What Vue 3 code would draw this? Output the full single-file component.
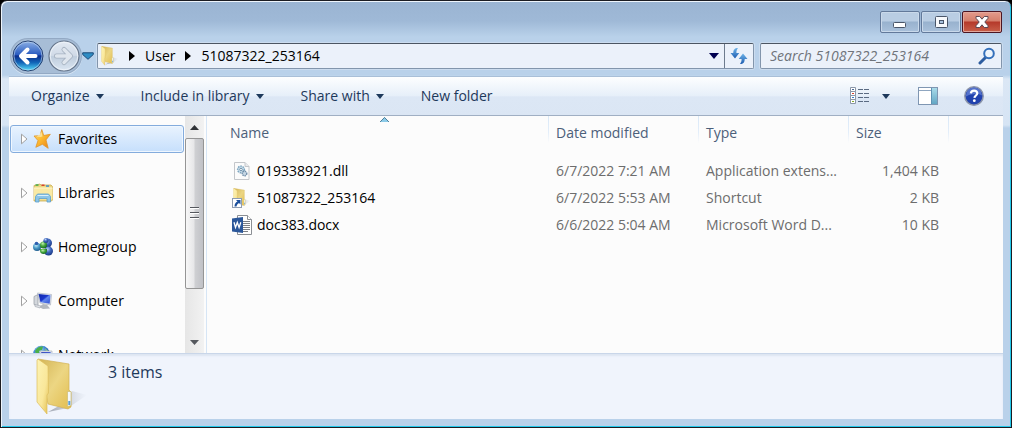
<script setup>
import { ref } from 'vue'

const query = ref('')

const commands = [
  { label: 'Organize', menu: true },
  { label: 'Include in library', menu: true },
  { label: 'Share with', menu: true },
  { label: 'New folder', menu: false },
]

const places = [
  { id: 'star', label: 'Favorites' },
  { id: 'libraries', label: 'Libraries' },
  { id: 'homegroup', label: 'Homegroup' },
  { id: 'computer', label: 'Computer' },
  { id: 'network', label: 'Network' },
]
const current = ref('star')

const files = [
  { icon: 'dll', name: '019338921.dll', date: '6/7/2022 7:21 AM', type: 'Application extens...', size: '1,404 KB' },
  { icon: 'shortcut', name: '51087322_253164', date: '6/7/2022 5:53 AM', type: 'Shortcut', size: '2 KB' },
  { icon: 'word', name: 'doc383.docx', date: '6/6/2022 5:04 AM', type: 'Microsoft Word D...', size: '10 KB' },
]
</script>

<template>
  <div class="window">
    <svg class="defs" width="0" height="0" aria-hidden="true">
      <defs>
        <linearGradient id="gFront" x1="0" x2="1" y1="0" y2="1">
          <stop offset="0" stop-color="#fdf3b4" /><stop offset=".6" stop-color="#f9e79a" /><stop offset="1" stop-color="#e3bf50" />
        </linearGradient>
        <linearGradient id="gBack" x1="0" x2="1" y1="0" y2="1">
          <stop offset="0" stop-color="#d3b455" /><stop offset=".5" stop-color="#ecd683" /><stop offset="1" stop-color="#e2bd4e" />
        </linearGradient>
        <linearGradient id="gShade" x1="0" x2="1" y1="0" y2="0">
          <stop offset="0" stop-color="#6b7280" stop-opacity=".6" /><stop offset="1" stop-color="#9aa3b0" stop-opacity="0" />
        </linearGradient>
        <linearGradient id="gBlue" x1="0" x2="0" y1="0" y2="1">
          <stop offset="0" stop-color="#8fb2e6" /><stop offset=".45" stop-color="#2a5cc0" /><stop offset=".5" stop-color="#0a2c8c" /><stop offset=".72" stop-color="#1266b8" /><stop offset="1" stop-color="#5be4ff" />
        </linearGradient>
        <linearGradient id="gGrey" x1="0" x2="0" y1="0" y2="1">
          <stop offset="0" stop-color="#e3eaf3" /><stop offset=".48" stop-color="#d0dae7" /><stop offset=".52" stop-color="#bfcddd" /><stop offset="1" stop-color="#dbe6f2" />
        </linearGradient>
        <radialGradient id="gGlobe" cx=".4" cy=".3" r=".7">
          <stop offset="0" stop-color="#b8e4ff" /><stop offset=".5" stop-color="#3f87d4" /><stop offset="1" stop-color="#0e3c90" />
        </radialGradient>
        <radialGradient id="gBall" cx=".4" cy=".3" r=".7">
          <stop offset="0" stop-color="#b6cdf4" /><stop offset=".5" stop-color="#3f68bd" /><stop offset="1" stop-color="#1c3a86" />
        </radialGradient>
        <radialGradient id="gGreen" cx=".4" cy=".3" r=".7">
          <stop offset="0" stop-color="#c4eeb2" /><stop offset=".5" stop-color="#45a83e" /><stop offset="1" stop-color="#17661f" />
        </radialGradient>
        <radialGradient id="gTeal" cx=".4" cy=".3" r=".7">
          <stop offset="0" stop-color="#c8f0f8" /><stop offset=".5" stop-color="#4c9cc8" /><stop offset="1" stop-color="#215f90" />
        </radialGradient>
        <linearGradient id="gStar" x1="0" x2="1" y1="0" y2="1">
          <stop offset="0" stop-color="#ffe070" /><stop offset=".5" stop-color="#fbb62e" /><stop offset="1" stop-color="#e87f16" />
        </linearGradient>
        <linearGradient id="gScreen" x1="0" x2="1" y1="0" y2="1">
          <stop offset="0" stop-color="#1028a8" /><stop offset=".45" stop-color="#1a36cc" /><stop offset=".55" stop-color="#5f86ee" /><stop offset="1" stop-color="#2c4cd0" />
        </linearGradient>
        <linearGradient id="gSync" x1="0" x2="0" y1="0" y2="1">
          <stop offset="0" stop-color="#6fb4e8" /><stop offset="1" stop-color="#1c5cb0" />
        </linearGradient>
        <linearGradient id="gPane" x1="0" x2="0" y1="0" y2="1">
          <stop offset="0" stop-color="#a9dbe9" /><stop offset="1" stop-color="#63a6c4" />
        </linearGradient>
        <symbol id="folder" viewBox="0 0 52 58">
          <path d="M12 54 32 50 51 37 36 33 30 44Z" fill="url(#gShade)" />
          <path d="M2 1 33 6 33 32 35 34 35 49 32 51 12 46Z" fill="url(#gBack)" stroke="#d3b254" stroke-width=".7" />
          <path d="M31.500 33.500h3.500v14l-3.500 1z" fill="#f4f8fb" stroke="#c6b76c" stroke-width=".6" /><path d="M32.300 43h2v4h-2z" fill="#5a9fd6" />
          <path d="M1 2 2 1 12 8 12.500 35 11 37 11 56 1 44Z" fill="url(#gFront)" stroke="#dcbd5c" stroke-width=".7" />
        </symbol>
      </defs>
    </svg>

    <header class="titlebar">
      <button class="cap" type="button" aria-label="Minimize">
        <svg width="16" height="16" viewBox="0 0 16 16"><rect x="1.500" y="8.500" width="12" height="5" rx="1" fill="#fff" stroke="#4a5669" /></svg>
      </button>
      <button class="cap" type="button" aria-label="Maximize">
        <svg width="16" height="16" viewBox="0 0 16 16"><rect x="2.500" y="2.500" width="12" height="11" rx="1" fill="#f7f9fc" stroke="#4a5669" /><rect x="6.500" y="6.500" width="4" height="3" fill="#a9c2de" stroke="#4a5669" /></svg>
      </button>
      <button class="cap close" type="button" aria-label="Close">
        <svg width="16" height="16" viewBox="0 0 16 16"><path d="M2 2.500h3.800l2.200 2.700 2.200-2.700H14v1.800L10.800 8l3.200 3.700v1.800h-3.800L8 10.800l-2.200 2.700H2v-1.800L5.200 8 2 4.300Z" fill="#fff" stroke="#5c4a55" stroke-linejoin="round" /></svg>
      </button>
    </header>

    <nav class="navbar" aria-label="Address">
      <div class="travel">
        <button type="button" class="round" aria-label="Back">
          <svg width="32" height="32" viewBox="0 0 32 32">
            <circle cx="16" cy="16" r="15" fill="url(#gBlue)" stroke="#26406e" /><circle cx="16" cy="16" r="14" fill="none" stroke="#c5daf2" stroke-opacity=".6" />
            <path d="M15.500 9.500 9 16l6.500 6.500M10 16h13.500" fill="none" stroke="#fff" stroke-width="4" stroke-linecap="round" stroke-linejoin="round" />
          </svg>
        </button>
        <button type="button" class="round" aria-label="Forward">
          <svg width="32" height="32" viewBox="0 0 32 32">
            <circle cx="16" cy="16" r="15" fill="url(#gGrey)" stroke="#66758a" stroke-width="1.200" /><circle cx="16" cy="16" r="13.800" fill="none" stroke="#f1f6fb" stroke-opacity=".8" />
            <path d="m16 9.500 6.500 6.500-6.500 6.500M22 16H8.500" fill="none" stroke="#a6b2c1" stroke-width="5" stroke-linecap="round" stroke-linejoin="round" />
            <path d="m16 9.500 6.500 6.500-6.500 6.500M22 16H8.500" fill="none" stroke="#dfe6ee" stroke-width="3.400" stroke-linecap="round" stroke-linejoin="round" />
          </svg>
        </button>
      </div>
      <button type="button" class="recent" aria-label="Recent pages">
        <svg width="12" height="8" viewBox="0 0 12 8"><path d="M.7.800h10.600v1.700L6 7.300.7 2.500Z" fill="#2f8dc4" stroke="#1d4a78" stroke-linejoin="round" /></svg>
      </button>
      <div class="address">
        <svg class="addr-icon" width="18" height="20"><use href="#folder" /></svg>
        <svg class="chev" width="6" height="10" viewBox="0 0 6 10"><path d="M0 0 6 5 0 10Z" /></svg>
        <a href="#user">User</a>
        <svg class="chev second" width="6" height="10" viewBox="0 0 6 10"><path d="M0 0 6 5 0 10Z" /></svg>
        <a href="#folder-path">51087322_253164</a>
        <button type="button" class="history" aria-label="Previous locations">
          <svg width="10" height="6" viewBox="0 0 10 6"><path d="M0 0h10L5 6Z" fill="#000050" /></svg>
        </button>
        <button type="button" class="refresh" aria-label="Refresh">
          <svg width="18" height="18" viewBox="0 0 18 18" fill="url(#gSync)">
            <path d="M8 1C4.500 1 3.300 3 3.300 6H.500l4.500 5.500L9.300 6H6.400C6.400 4 6.800 2.600 8 1Z" />
            <path d="M10 17c3.500 0 4.700-2 4.700-5h2.800L13 6.500 8.700 12h2.900c0 2-.4 3.400-1.600 5Z" />
          </svg>
        </button>
      </div>
      <label class="search">
        <input v-model="query" type="search" placeholder="Search 51087322_253164" aria-label="Search 51087322_253164" />
        <svg width="18" height="18" viewBox="0 0 18 18"><path d="M7.500 10.500 2 16" stroke="#2e5d9f" stroke-width="3" stroke-linecap="round" /><circle cx="11" cy="6.500" r="4.800" fill="#eef5fc" stroke="#3470bb" stroke-width="2" /></svg>
      </label>
    </nav>

    <div class="client">
      <div class="toolbar" role="toolbar" aria-label="Commands">
        <button v-for="c in commands" :key="c.label" type="button" class="command">
          {{ c.label }}
          <svg v-if="c.menu" width="8" height="5" viewBox="0 0 8 5"><path d="M0 0h8L4 5Z" fill="#1e395b" /></svg>
        </button>
        <button type="button" class="tool views" aria-label="Change your view">
          <svg width="20" height="18" viewBox="0 0 20 18">
            <g fill="#fff" stroke="#8b97a8"><path d="M.500.500h5v4h-5zM.500 4.500h5v4h-5zM.500 8.500h5v4h-5zM.500 12.500h5v4h-5z" /></g>
            <path d="M2 2.500h2" stroke="#4c6b96" /><path d="M2 6.500h2" stroke="#d8452e" /><path d="M2 10.500h2" stroke="#3a7fc8" /><path d="M2 14.500h2" stroke="#86a82c" />
            <path d="M8 2.500h5m1 0h5M8 6.500h5m1 0h5M8 10.500h5m1 0h5M8 14.500h5m1 0h5" stroke="#5b6b82" />
          </svg>
        </button>
        <button type="button" class="tool more" aria-label="More view options">
          <svg width="8" height="5" viewBox="0 0 8 5"><path d="M0 0h8L4 5Z" fill="#1e395b" /></svg>
        </button>
        <button type="button" class="tool pane" aria-label="Show the preview pane">
          <svg width="20" height="18" viewBox="0 0 20 18"><rect x=".5" y=".5" width="19" height="17" fill="#fff" stroke="#7f96b2" /><path d="M1 3.500h13" stroke="#8fa6c0" /><path d="M14 1h5v16h-5z" fill="url(#gPane)" /><path d="M13.500 1v16" stroke="#5f93b4" /></svg>
        </button>
        <button type="button" class="tool help" aria-label="Get help">
          <svg width="20" height="20" viewBox="0 0 20 20">
            <circle cx="10" cy="10" r="9.200" fill="#2142ae" stroke="#8c95aa" stroke-width="1.500" /><path d="M2 9.500a8 8 0 0 1 16 0c-4-2-10-2-16 1Z" fill="#7f9be4" opacity=".55" />
            <path d="M6.800 7.400C7 5.300 8.300 4.600 10.100 4.600c2 0 3.200 1 3.200 2.600 0 2.200-2.700 2.400-2.900 4.700" fill="none" stroke="#fff" stroke-width="2.200" /><circle cx="10.300" cy="14.700" r="1.400" fill="#fff" />
          </svg>
        </button>
      </div>

      <div class="main">
        <aside class="sidebar">
          <ul class="tree">
            <li v-for="p in places" :key="p.id">
              <button type="button" class="place" :class="{ selected: p.id === current }" @click="current = p.id">
                <svg class="expander" width="7" height="12" viewBox="0 0 7 12"><path d="M.500 1.200 6 6 .500 10.800Z" fill="#fff" stroke="#a0a0a0" /></svg>
                <svg class="place-icon" width="20" height="20" viewBox="0 0 20 20">
                  <g v-if="p.id === 'star'">
                    <path d="M8.800.500 10.700 6.500l6.600-1.200-4.300 5.600 2.200 8.400-5.800-4-6.600 3 2.200-6.700L1 7l6-.3Z" fill="url(#gStar)" stroke="#e0932a" stroke-width=".8" stroke-linejoin="round" />
                    <path d="M8.600 3 9.500 7.500l-2.400.5-3.600-.2Z" fill="#fff6c4" opacity=".6" />
                  </g>
                  <g v-else-if="p.id === 'libraries'">
                    <path d="M1 2.500 7 1l1 1h10l1.500 1.500V17l-1 1H1Z" fill="#ecd780" stroke="#c9ac54" stroke-width=".8" />
                    <path d="M2.500 1.300h3v1.500h-3z" fill="#3faa48" /><path d="M8.500 1.500h3v1.500h-3z" fill="#d8452e" /><path d="M13 2.300h3v1.500h-3z" fill="#3b8fd2" />
                    <path d="M1 5h18.500v11.500H1Z" fill="#f9e9a4" /><path d="M1 5h18.500" stroke="#fff6cf" />
                    <path d="M2.500 19v-5.500l2-2.500h11l2 2.500V19H14v-3.500H6V19Z" fill="#8cc5e8" stroke="#5c9fcc" stroke-width=".8" /><path d="M4.500 12.500h11" stroke="#d9f0fb" />
                  </g>
                  <g v-else-if="p.id === 'homegroup'">
                    <circle cx="14.500" cy="6" r="4.500" fill="url(#gBall)" /><circle cx="15.500" cy="14" r="4.500" fill="url(#gBall)" />
                    <circle cx="4" cy="10" r="4" fill="url(#gTeal)" /><circle cx="10.500" cy="8" r="3.500" fill="url(#gGreen)" />
                    <circle cx="13" cy="3.500" r="2.500" fill="url(#gBall)" /><path d="M7 12h7v2c0 4-7 4-7 0Z" fill="url(#gGreen)" /><circle cx="3.500" cy="6.500" r="1.800" fill="#2f5fae" />
                  </g>
                  <g v-else-if="p.id === 'computer'">
                    <path d="M1 5.500 5 3.500v12l-4-2Z" fill="#d3d7dc" stroke="#9299a2" stroke-width=".7" />
                    <path d="M4.500 2 18.500 3.500 17.500 14 7 12Z" fill="#e8ecf2" stroke="#aab2bf" stroke-width=".7" /><path d="M5.500 3 17.500 4.300 16.700 12.800 7.500 11.200Z" fill="url(#gScreen)" />
                    <path d="m10 13 4 .7 3 3.800-7 .5-4-2Z" fill="#b3b8c0" /><path d="M2 13.500 8 15l-1 2-5-1.500Z" fill="#dfe2e6" stroke="#9da3ac" stroke-width=".6" />
                  </g>
                  <g v-else>
                    <circle cx="8.500" cy="9" r="8.300" fill="url(#gGlobe)" /><path d="M2 6C4 2 7 1 10 1.500L9 5 6 6l1 4-3 2Z" fill="#4bb04a" /><path d="m12 3 3 3-2 1.500Z" fill="#8fd07c" />
                    <path d="M7 6h12v9H7Z" fill="#e8ecf2" stroke="#aab2bf" stroke-width=".7" /><path d="M8.200 7.200h9.600v6.600H8.200Z" fill="url(#gScreen)" /><path d="M10 16h6v2h-6z" fill="#b3b8c0" />
                  </g>
                </svg>
                <span>{{ p.label }}</span>
              </button>
            </li>
          </ul>
          <div class="scrollbar" aria-hidden="true">
            <svg class="arrow" width="9" height="5" viewBox="0 0 9 5"><path d="M4.500 0 9 5H0Z" fill="#303236" /></svg>
            <div class="track">
              <div class="thumb"><i></i><i></i><i></i></div>
            </div>
            <svg class="arrow" width="9" height="5" viewBox="0 0 9 5"><path d="M0 0h9L4.500 5Z" fill="#55585e" /></svg>
          </div>
        </aside>

        <section class="content">
          <table>
            <colgroup><col /><col class="w-date" /><col class="w-type" /><col class="w-size" /><col class="w-rest" /></colgroup>
            <thead>
              <tr>
                <th scope="col" class="name" aria-sort="ascending">
                  <svg class="sort" width="9" height="5" viewBox="0 0 9 5"><path d="M4.500 0 9 5H0Z" fill="#8ccbe8" /><path d="M0 5 4.500.500 9 5" fill="none" stroke="#3c6a86" stroke-width=".8" /></svg>
                  Name
                </th>
                <th scope="col">Date modified</th>
                <th scope="col">Type</th>
                <th scope="col">Size</th>
                <td></td>
              </tr>
            </thead>
            <tbody>
              <tr v-for="f in files" :key="f.name">
                <td class="name">
                  <div class="file">
                    <svg width="20" height="20" viewBox="0 0 20 20">
                      <g v-if="f.icon === 'dll'">
                        <path d="M2.500 1.500H13l4 4v13H2.500Z" fill="#fbfbfb" stroke="#c3c6ca" /><path d="M13 1.500v4h4" fill="#e8eaed" stroke="#c3c6ca" />
                        <circle cx="9" cy="8.500" r="3.300" fill="#cfe2ee" stroke="#7fa6c0" stroke-width="1.600" stroke-dasharray="1.600 .8" /><circle cx="9" cy="8.500" r="1.300" fill="#fff" stroke="#6c8ea8" />
                        <circle cx="12.500" cy="12.500" r="2.300" fill="#c5d6e4" stroke="#6f8da8" stroke-width="1.400" stroke-dasharray="1.300 .7" />
                      </g>
                      <g v-else-if="f.icon === 'shortcut'">
                        <svg x="1" y="0" width="18" height="20"><use href="#folder" /></svg>
                        <rect x=".5" y="10.500" width="9" height="9" fill="#fff" stroke="#8e9db2" /><path d="M4 12h4.500v4.500L7 15c-1.500 1-2.300 2-2.500 3.500H2.500c0-2.500 1-4 3-5Z" fill="#1c4f9c" />
                      </g>
                      <g v-else>
                        <path d="M5.500.500h10l4 4v15h-14Z" fill="#fff" stroke="#8b8f94" /><path d="M15.500.500v4h4" fill="#fff" stroke="#8b8f94" />
                        <path d="M11 6.500h7M11 8.500h7M11 10.500h7M11 12.500h7M11 14.500h7M11 16.500h5" stroke="#7d8085" />
                        <path d="M0 3.500 11 2v16L0 16.500Z" fill="#2b579a" /><path d="m2 7.300 1.500 5.200L5.300 7.500l1.800 5 1.700-5.200" fill="none" stroke="#fff" stroke-width="1.300" />
                      </g>
                    </svg>
                    <span>{{ f.name }}</span>
                  </div>
                </td>
                <td>{{ f.date }}</td>
                <td>{{ f.type }}</td>
                <td class="size">{{ f.size }}</td>
                <td></td>
              </tr>
            </tbody>
          </table>
        </section>
      </div>

      <footer class="details">
        <svg width="52" height="58"><use href="#folder" /></svg>
        <span>3 items</span>
      </footer>
    </div>
  </div>
</template>

<style>
html,
body {
  margin: 0;
  background: #000;
}
</style>

<style scoped>
.window {
  box-sizing: border-box;
  height: 100vh;
  min-height: 320px;
  display: flex;
  flex-direction: column;
  padding: 1px 8px 8px;
  border: 1px solid #1b1c22;
  border-radius: 7px 7px 0 0;
  box-shadow: inset 1px 1px 0 #eef5fc, inset -1px -1px 0 #22c8ea;
  background: linear-gradient(#9ab4d2 0, #9fb9d7 20px, #b9d1ea 36px, #b9d1ea 74px, #dbe7f5 78px, #d6e4f4 124px, #b9d1ea 127px);
  font-family: "Open Sans", "Noto Sans", sans-serif;
  font-size: 14px;
  line-height: 20px;
  color: #000;
}
.defs {
  position: absolute;
}
button {
  margin: 0;
  padding: 0;
  border: 0;
  background: none;
  font: inherit;
  color: inherit;
}
svg {
  display: block;
  flex: none;
}
.titlebar {
  display: flex;
  justify-content: flex-end;
  gap: 1px;
  padding: 9px 1px 5px;
}
.cap {
  display: flex;
  align-items: center;
  justify-content: center;
  box-sizing: border-box;
  width: 40px;
  height: 22px;
  border: 1px solid #62799a;
  border-radius: 2px;
  box-shadow: inset 0 0 0 1px #c9d9ea;
  background: linear-gradient(#b9cde3 0 45%, #98b2ce 50%, #a9c1db);
}
.close {
  border-color: #4c1522;
  box-shadow: inset 0 0 0 1px #e2a79c;
  background: linear-gradient(#e39b8c 0, #d57f6c 45%, #b5392a 50%, #c8604a);
}
.navbar {
  display: flex;
  align-items: center;
  box-sizing: border-box;
  height: 38px;
  padding: 0 1px 2px 0;
}
.travel {
  display: flex;
  gap: 4px;
  margin-left: 2px;
  padding: 1px;
  border-radius: 18px;
  background: #a7bdd6;
  box-shadow: 0 0 0 1px #93a9c4, 0 1px 0 1px #d5e4f3;
}
.recent {
  padding: 4px 1px;
}
.address {
  flex: 1;
  display: flex;
  align-items: center;
  box-sizing: border-box;
  height: 26px;
  margin: 0 6px 0 2px;
  border: 1px solid #8295ac;
  border-top-color: #4b5562;
  border-radius: 2px;
  background: #ebf1fa;
  box-shadow: 0 0 0 1px #cbdcef;
}
.address a {
  color: #000;
  text-decoration: none;
}
.addr-icon {
  margin: 0 10px 0 3px;
}
.chev {
  margin-right: 10px;
}
.chev.second {
  margin-left: 10px;
}
.history {
  margin-left: auto;
  padding: 9px 5px;
}
.refresh {
  align-self: stretch;
  display: flex;
  align-items: center;
  padding: 0 5px;
  border-left: 1px solid #6d7b8d;
}
.search {
  display: flex;
  align-items: center;
  box-sizing: border-box;
  width: 242px;
  height: 26px;
  padding: 0 5px 0 9px;
  border: 1px solid #8295ac;
  border-top-color: #4b5562;
  border-radius: 2px;
  background: #ebf1fa;
  box-shadow: 0 0 0 1px #cbdcef;
}
.search input {
  flex: 1;
  min-width: 0;
  padding: 0;
  border: 0;
  outline: 0;
  background: none;
  font: inherit;
}
.search input::placeholder {
  font-style: italic;
  color: #6f747b;
  opacity: 1;
}
.client {
  flex: 1;
  min-height: 0;
  display: flex;
  flex-direction: column;
  background: #fcfcfc;
}
.toolbar {
  display: flex;
  align-items: center;
  height: 38px;
  padding: 0 19px 0 22px;
  border-top: 1px solid #a9bfd8;
  border-bottom: 1px solid #a0afc3;
  background: linear-gradient(#fdfeff 0, #e6eff9 50%, #dce7f5 52%, #dbe6f4);
  color: #1e395b;
}
.command {
  display: flex;
  align-items: center;
  gap: 6px;
  margin-right: 37px;
  white-space: nowrap;
}
.views {
  margin-left: auto;
}
.more {
  margin: 0 28px 0 12px;
}
.pane {
  margin-right: 26px;
}
.main {
  flex: 1;
  min-height: 0;
  display: flex;
}
.sidebar {
  display: flex;
  width: 197px;
  border-right: 1px solid #d6e5f5;
  overflow: hidden;
}
.tree {
  flex: 1;
  display: flex;
  flex-direction: column;
  gap: 26px;
  margin: 0;
  padding: 9px 1px 0;
  list-style: none;
}
.place {
  display: flex;
  align-items: center;
  box-sizing: border-box;
  width: 100%;
  height: 28px;
  padding-left: 10px;
  border: 1px solid transparent;
  border-radius: 3px;
}
.place.selected {
  border-color: #84acdd;
  background: linear-gradient(#e9f3fe, #c6dffc);
  box-shadow: inset 0 0 0 1px #eff7ff;
}
.place-icon {
  margin: 0 5px;
}
.scrollbar {
  display: flex;
  flex-direction: column;
  align-items: center;
  width: 19px;
  margin-right: 2px;
  background: linear-gradient(90deg, #e6e6e6, #f2f2f2);
}
.arrow {
  margin: 9px 0 8px;
}
.track {
  flex: 1;
  align-self: stretch;
}
.thumb {
  display: flex;
  flex-direction: column;
  align-items: center;
  justify-content: center;
  gap: 3px;
  box-sizing: border-box;
  height: 78%;
  border: 1px solid #959595;
  border-radius: 2px;
  background: linear-gradient(90deg, #f7f7f7, #e6e6e8 48%, #cfd0d3 52%, #c0c1c6);
}
.thumb i {
  width: 9px;
  height: 2px;
  background: linear-gradient(#55585e 50%, #fff 50%);
}
.content {
  flex: 1;
  min-width: 0;
}
table {
  width: 100%;
  table-layout: fixed;
  border-collapse: collapse;
}
.w-date,
.w-type {
  width: 150px;
}
.w-size {
  width: 100px;
}
.w-rest {
  width: 54px;
}
th,
td {
  padding: 0 10px 0 7px;
  font-weight: 400;
  text-align: left;
  white-space: nowrap;
  color: #6d6d6d;
}
th {
  position: relative;
  height: 34px;
  padding-bottom: 7px;
  color: #4c607a;
  background: linear-gradient(#d9e8f7, #e3eefa 60%, transparent) right top / 1px 27px no-repeat;
}
.name {
  padding-left: 23px;
}
.sort {
  position: absolute;
  top: 1px;
  left: calc(50% + 2px);
}
tbody td {
  height: 27px;
}
td.size {
  padding-left: 0;
  text-align: right;
}
.file {
  display: flex;
  align-items: center;
  gap: 5px;
  margin-left: 2px;
  color: #000;
}
.details {
  display: flex;
  box-sizing: border-box;
  height: 66px;
  padding: 4px 27px;
  gap: 20px;
  border-top: 1px solid #c9d6e9;
  box-shadow: inset 0 2px 2px #dde5f2;
  background: #f0f4fc;
  font-size: 16px;
  line-height: 28px;
  color: #1e395b;
}
</style>
